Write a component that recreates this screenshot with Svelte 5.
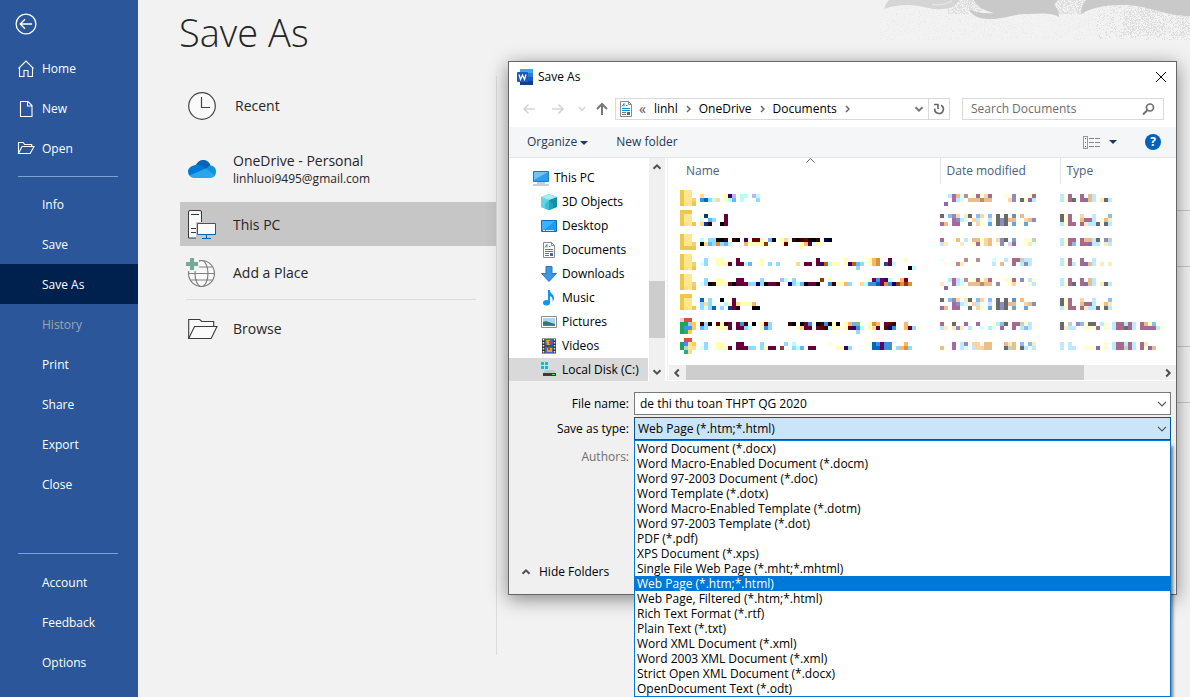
<script lang="ts">
    const topItems = [
        { label: "Home", icon: "home" },
        { label: "New", icon: "page" },
        { label: "Open", icon: "open" }
    ];
    const fileItems = ["Info", "Save", "Save As", "History", "Print", "Share", "Export", "Close"];
    const bottomItems = ["Account", "Feedback", "Options"];

    const crumbs = ["linhl", "OneDrive", "Documents"];

    const treeItems = [
        { label: "This PC", icon: "pc" },
        { label: "3D Objects", icon: "cube" },
        { label: "Desktop", icon: "desktop" },
        { label: "Documents", icon: "doc" },
        { label: "Downloads", icon: "down" },
        { label: "Music", icon: "music" },
        { label: "Pictures", icon: "picture" },
        { label: "Videos", icon: "video" },
        { label: "Local Disk (C:)", icon: "disk" }
    ];

    const fileTypes = [
        "Word Document (*.docx)",
        "Word Macro-Enabled Document (*.docm)",
        "Word 97-2003 Document (*.doc)",
        "Word Template (*.dotx)",
        "Word Macro-Enabled Template (*.dotm)",
        "Word 97-2003 Template (*.dot)",
        "PDF (*.pdf)",
        "XPS Document (*.xps)",
        "Single File Web Page (*.mht;*.mhtml)",
        "Web Page (*.htm;*.html)",
        "Web Page, Filtered (*.htm;*.html)",
        "Rich Text Format (*.rtf)",
        "Plain Text (*.txt)",
        "Word XML Document (*.xml)",
        "Word 2003 XML Document (*.xml)",
        "Strict Open XML Document (*.docx)",
        "OpenDocument Text (*.odt)"
    ];

    let fileName = $state("de thi thu toan THPT QG 2020");
    let fileType = $state("Web Page (*.htm;*.html)");

    // One letter per block colour, "." is an empty block
    const palette: Record<string, string> = {
        k: "#000000", w: "#66003a", r: "#660000", m: "#3a0000", p: "#3a0066", n: "#000066",
        b: "#0066b6", d: "#3a90db", s: "#90dbff", l: "#66b6ff", c: "#b6ffff", C: "#dbffff",
        y: "#ffffb6", Y: "#ffffdb", o: "#ffdb90", O: "#ffb666", t: "#db903a", h: "#903a00",
        H: "#b66600", v: "#b6b6ff", g: "#90b690", u: "#003a90", D: "#3a3a90", z: "#903a3a",
        P: "#660066"
    };
    const iconPalette: Record<string, string> = {
        a: "#ebc94a", f: "#ffe692", e: "#ffe082", n: "#ecd272", i: "#f6cbc8", r: "#dc4e41",
        g: "#1ea362", G: "#37a96b", b: "#4c8bf5", v: "#a8c4f2", y: "#ffcd46", Y: "#fbe09a",
        x: "#f4dc9a", w: "#b5d6c8"
    };

    const folder = ["aff.", "aff.", "affn", "aefa"];
    const folderTop = ["aaa.", "aff.", "aff.", "aefa"];
    const dateA = ["..sPtcz.ywyOw...yYD...yw", "...Psc.ttthtt....OD.kyps", ".p...Y"];
    const dateB = ["kCdDO.ok.dO.d.k.k.u.t", "Y..PDsc.Osy.s.kDktt..OtD", "Pt.Pw..k.Oy.b.kDk.b..b"];
    const typeA = ["s.w..w.ts", "sywk.wpts.oks"];
    const typeB = ["kyw..O..s...d", "kyw..twws.yto", "syww.wossk.ks"];

    const files = [
        {
            icon: folder,
            name: ["o.....ypvYcc.vc", "dbsco.ycl.c...s"],
            date: dateA,
            type: typeA
        },
        {
            icon: folderTop,
            tall: true,
            name: ["Yu....w", "C.ls..w", "oum..kw"],
            date: dateB,
            type: typeB
        },
        {
            icon: ["aff.", "aff.", "affn", "aaaa"],
            name: [
                "c.sskkm.mk.p.rry.lk.yoCmkmrkkm.nk",
                "kolstslc...Oyyyyh...Yr...yOwCyy",
                ".........................y"
            ],
            date: ["w..yt.s.ttyOt.ODk.b..yyg", "so...o..ywyOt.yD.vw..yoC"],
            type: ["syww.wttsk.Dg", "sywd.wwpss.os"]
        },
        {
            icon: folder,
            name: [
                ".s..yy...w.....y.............w......y.....yOt..w...y",
                "Cs..yyyw.wwcl..y.s.s....o.ww.wpHcyy.ypHls.yOt.Dwc",
                ".......................................s............kc"
            ],
            date: ["C.....z..z...c..s.wwgss", ".Y..zo..Y....s.t..w.sDs"],
            type: ["s.w..w..s", "syws.wpts.o.o"]
        },
        {
            icon: folder,
            name: [
                ".s..yy...ww....s....vc.s......h.y.........yPdPpc..Ow",
                "Cskmyyywkwwwssnskwwm..nsclkwwk..dmyyOs..ocddbPtdnhtht"
            ],
            date: ["..sPvcz.ywyOw.y.yyw.D.sy", "o..Psc.ttthtt.D..yO...ys", ".p...Y"],
            type: typeA
        },
        {
            icon: folderTop,
            tall: true,
            name: ["b.s..k..w", "sos...cywoyyyO", "sCsb.s.uwm...kk"],
            date: dateB,
            type: typeB
        },
        {
            icon: ["irr.", "ggvy", "gbby", "gGy."],
            name: [
                "msk.rymw.wdm.k.yrs....mk.kwd.kmdkyk.yOlg..ytO.wrm..O",
                "ls..yyyw.wwsc..yds......yoww.wrmcyy.yrpdc.yow.rnd..OwsY",
                ".......................................s"
            ],
            date: ["w..k..P..P...ysdk.wwgys", "so.oDo.sY.c.sc.w..w.sds"],
            type: ["k.g.Ddykk.sy.swwsws.wtyd", "koss..yyyw.y.swwkws.wwwwsy"]
        },
        {
            icon: [".rr.", "gbYy", "gwfY", ".Gx."],
            name: [
                ".s..yy...ww....s.....s.c........Y.........YbdPdd...O",
                "Cs..yyyw.wwwss.syww.z..scl.ww.....yyps.....bbPdd.sOts"
            ],
            date: ["...P.sD.OO.tt...tot.d.do", "tY.P.sc.sOOtt...kgt.ksCs"],
            type: ["s.s........y.swwsws.wo", "s.ss..yyyp.y.swwgws.wypt"]
        }
    ];

    // Speckles of the header artwork, denser towards the right
    function speckles(count: number, x0: number, x1: number, y0: number, y1: number, seed: number) {
        let d = "";
        let s = seed;
        const next = () => {
            s = (s * 48271) % 2147483647;
            return s / 2147483647;
        };
        next();
        for (let i = 0; i < count; i++) {
            const x = Math.floor(x0 + next() * (x1 - x0));
            const y = Math.floor(y0 + next() * (y1 - y0));
            d += `M${x} ${y}h1v1h-1z`;
        }
        return d;
    }
    const lightDots = speckles(1500, 20, 330, 0, 40, 7);
    const midDots = speckles(400, 88, 122, 0, 14, 91) + speckles(350, 192, 224, 0, 14, 33);
    const denseDots = speckles(500, 236, 330, 6, 40, 12) + speckles(650, 264, 330, 8, 36, 51);
</script>

{#snippet mosaic(lines: string[], colors: Record<string, string>, width: number)}
    <svg class="mosaic" width={width * 4} height={lines.length * 4} shape-rendering="crispEdges" aria-hidden="true">
        {#each lines as line, y}
            {#each line.split("") as cell, x}
                {#if cell !== "."}
                    <rect x={x * 4} y={y * 4} width="4" height="4" fill={colors[cell]} />
                {/if}
            {/each}
        {/each}
    </svg>
{/snippet}

{#snippet chevron(dir: string, color: string)}
    <svg class="chevron {dir}" width="10" height="10" viewBox="0 0 10 10" fill="none" stroke={color} stroke-width="2" aria-hidden="true">
        <path d="M1.5 3.2 5 6.7l3.5-3.5" />
    </svg>
{/snippet}

{#snippet documentIcon()}
    <svg width="16" height="16" viewBox="0 0 16 16" aria-hidden="true">
        <path d="M2.5.5h8l3 3v12h-11z" fill="#fff" stroke="#8a8a8a" />
        <path d="M10.5.5v3h3" fill="none" stroke="#8a8a8a" />
        <path d="M4 5.5 6 2.5v3M8 4.5h1.5M4 7.5h8M4 9.5h8" stroke="#1e88d8" fill="none" />
        <path d="M4 11.5h4M4 13.5h4" stroke="#777" />
        <path d="M9 11h3v3H9z" fill="#3f6f8f" />
    </svg>
{/snippet}

<div class="backstage">
    <nav class="sidebar">
        <button class="back" aria-label="Back">
            <svg width="22" height="22" viewBox="0 0 22 22" fill="none" stroke="#fff" stroke-width="1.3">
                <circle cx="11" cy="11" r="9.9" />
                <path d="M17 11H5.5M10 6.2 5.2 11l4.8 4.8" />
            </svg>
        </button>
        {#each topItems as item}
            <button class="nav-item">
                <svg width="18" height="18" viewBox="0 0 18 18" fill="none" stroke="#fff" stroke-width="1.1">
                    {#if item.icon === "home"}
                        <path d="M1.5 8.5 9 1l7.5 7.5M2.5 7.8v8.7H7v-6h4v6h4.5V7.8" />
                    {:else if item.icon === "page"}
                        <path d="M3.5 1.5H11l4 4v11H3.5zM10.5 1.5V6H15" />
                    {:else}
                        <path d="M1.5 13.5v-11h4.7l1.5 2h7v2M1.5 13.5l3.5-7h12l-3.8 7z" />
                    {/if}
                </svg>
                {item.label}
            </button>
        {/each}
        <hr />
        {#each fileItems as item}
            <button class="nav-item" class:active={item === "Save As"} disabled={item === "History"}>{item}</button>
        {/each}
        <hr class="push" />
        {#each bottomItems as item}
            <button class="nav-item">{item}</button>
        {/each}
    </nav>

    <main>
        <svg class="art" width="330" height="42" viewBox="0 0 330 42" shape-rendering="auto" aria-hidden="true">
            <path d={lightDots} fill="#ebebeb" />
            <path d={midDots} fill="#dfdfdf" />
            <path d={denseDots} fill="#dedede" />
            <path d="M24 9c1-4 3-7 5-9h71c-5 6-10 9-18 9-13 1-20-4-34-4-9 0-16 1-24 4z" fill="#d5d5d5" />
            <path d="M72 4c8 2 14 0 20-3" fill="none" stroke="#ececec" />
            <path d="M109 9c2 6 9 10 21 10 15 0 22-5 38-5 12 0 23-2 31 3 0-6-3-10-5-12l4-5h-84c3 6 8 10 20 13-10 1-18 0-25-4z" fill="#c9c9c9" />
            <path d="M221 14c0-6 2-11 5-14h104v16c-25 0-42-11-68-11-18 0-31 3-41 9z" fill="#c9c9c9" />
        </svg>
        <h1>Save As</h1>
        <div class="content">
            <div class="places">
                <button class="place recent-place">
                    <svg width="28" height="28" viewBox="0 0 28 28" fill="none" stroke="#444" stroke-width="1.2">
                        <circle cx="14" cy="14" r="13.3" fill="#fafafa" />
                        <path d="M13.5 5v10.5H22" />
                    </svg>
                    <span>Recent</span>
                </button>
                <button class="place drive">
                    <svg width="28" height="18" viewBox="0 0 28 18">
                        <path d="M8 5C9 2 12 0 15 0c3.500 0 6.500 2 7.500 5.500L17 10z" fill="#0364b8" />
                        <path d="M5.500 17.500A5.800 5.800 0 0 1 0 12c0-3.500 2.800-6 6-6.500 2-1.500 5-1.500 7 0l6 4-13 8z" fill="#0078d4" />
                        <path d="M22 5.500c3.500 0 6 2.500 6 6 0 2-.7 3.500-2 4.800L17 10z" fill="#1490df" />
                        <path d="M1.500 15.500 17.500 8.500 27 15.500c-1 1.500-2.500 2.500-4.500 2.500H6c-2 0-3.500-1-4.500-2.500z" fill="#28a8ea" />
                    </svg>
                    <span>OneDrive - Personal<small>linhluoi9495@gmail.com</small></span>
                </button>
                <button class="place selected">
                    <svg width="28" height="30" viewBox="0 0 28 30">
                        <path d="M.5 28V2Q.5.5 2 .5h10q1.500 0 1.500 1.500v26z" fill="#fafafa" stroke="#3b3b3b" />
                        <path d="M3 4.500h8M3 18.500h5M3 22.500h5" stroke="#3b3b3b" />
                        <path d="M8 12h20v18H8z" fill="#c6c6c6" />
                        <path d="M9.500 13.500h18v11h-18z" fill="#fafafa" stroke="#0063b1" />
                        <path d="M18.500 25v3.500M14 28.500h9" stroke="#0063b1" />
                    </svg>
                    <span>This PC</span>
                </button>
                <button class="place add">
                    <svg width="30" height="30" viewBox="0 0 30 30" fill="none" stroke="#808080" stroke-width="1.2">
                        <circle cx="15.5" cy="15.5" r="13" fill="#fafafa" />
                        <ellipse cx="15.5" cy="15.5" rx="6.5" ry="13" />
                        <path d="M2.500 15.500h26M5 9h21M5 22h21" />
                        <path d="M0 0h13v13H0z" fill="#f2f2f2" stroke="none" />
                        <path d="M4 0h4v4h4v4H8v4H4V8H0V4h4z" fill="#76a797" stroke="none" />
                    </svg>
                    <span>Add a Place</span>
                </button>
                <hr />
                <button class="place browse">
                    <svg width="30" height="22" viewBox="0 0 30 22" fill="#fafafa" stroke="#3b3b3b" stroke-width="1.1">
                        <path d="M.7 20.500V1.500h11l2 2h12v5" />
                        <path d="M.7 20.500 6.500 8.500h22.500l-5.800 12z" />
                    </svg>
                    <span>Browse</span>
                </button>
            </div>
            <div class="recent">
                {#each ["", "short", "", "short"] as size}
                    <div class="recent-row {size}"></div>
                {/each}
            </div>
        </div>
    </main>

    <section class="dialog" role="dialog" aria-label="Save As">
        <header class="titlebar">
            <svg width="16" height="16" viewBox="0 0 16 16" aria-hidden="true">
                <path d="M3 0h13v4H3z" fill="#41a5ee" />
                <path d="M3 4h13v4H3z" fill="#2b7cd3" />
                <path d="M3 8h13v4H3z" fill="#185abd" />
                <path d="M3 12h13v4H3z" fill="#103f91" />
                <rect y="3" width="11" height="10" rx="1" fill="#185abd" />
                <path d="m2 5.500 1.500 5 2-4.500 2 4.500L9 5.500" fill="none" stroke="#fff" stroke-width="1.3" />
            </svg>
            <span>Save As</span>
            <button class="close" aria-label="Close">
                <svg width="12" height="12" viewBox="0 0 12 12" stroke="#000"><path d="m1 1 10 10M11 1 1 11" /></svg>
            </button>
        </header>

        <div class="address">
            <div class="arrows">
                <button aria-label="Back" disabled>
                    <svg width="14" height="12" viewBox="0 0 14 12" fill="none" stroke="#d5d5d5" stroke-width="1.6"><path d="M13 6H2M6.5 1.5 2 6l4.5 4.5" /></svg>
                </button>
                <button aria-label="Forward" disabled>
                    <svg width="14" height="12" viewBox="0 0 14 12" fill="none" stroke="#d5d5d5" stroke-width="1.6"><path d="M1 6h11M7.5 1.5 12 6l-4.5 4.5" /></svg>
                </button>
                <button aria-label="Recent locations" class="small">
                    <svg width="8" height="8" viewBox="0 0 8 8" fill="none" stroke="#d5d5d5" stroke-width="1.5"><path d="m1 2 3 3.5L7 2" /></svg>
                </button>
                <button aria-label="Up">
                    <svg width="12" height="14" viewBox="0 0 12 14" fill="none" stroke="#777" stroke-width="2"><path d="M6 13V2M1 7l5-5 5 5" /></svg>
                </button>
            </div>
            <div class="path">
                {@render documentIcon()}
                <span class="overflow">«</span>
                {#each crumbs as crumb}
                    <button class="crumb">{crumb}</button>
                    <svg width="5" height="8" viewBox="0 0 5 8" fill="none" stroke="#666" stroke-width="1.5" aria-hidden="true"><path d="m1 1 3 3-3 3" /></svg>
                {/each}
                <button class="history" aria-label="Previous locations">{@render chevron("", "#777")}</button>
                <button class="refresh" aria-label="Refresh">
                    <svg width="12" height="12" viewBox="0 0 12 12" fill="none" stroke="#666" stroke-width="1.6"><path d="M8 2.3A4.300 4.300 0 1 1 1.800 5.500M1 1.500h4V6" /></svg>
                </button>
            </div>
            <div class="search">
                <input type="search" placeholder="Search Documents" aria-label="Search Documents" />
                <svg width="14" height="12" viewBox="0 0 14 12" fill="none" stroke="#707070" aria-hidden="true">
                    <circle cx="9" cy="4.5" r="3.5" stroke-width="1.7" />
                    <path d="M6.500 7 2 11.500" stroke-width="2" />
                </svg>
            </div>
        </div>

        <div class="toolbar">
            <button>Organize <i class="caret"></i></button>
            <button>New folder</button>
            <button class="view" aria-label="Change your view">
                <svg width="17" height="13" viewBox="0 0 17 13" fill="none" shape-rendering="crispEdges">
                    <path d="M.5.5h4v12h-4z" stroke="#999" />
                    <path d="M6 2.5h5M12 2.5h5M6 6.5h5M12 6.5h5M6 10.5h5M12 10.5h5" stroke="#888" />
                    <path d="M2 2h1v1H2z" fill="#555" />
                    <path d="M2 6h1v1H2z" fill="#2d8fe0" />
                    <path d="M2 10h1v1H2z" fill="#d03030" />
                </svg>
                <i class="caret"></i>
            </button>
            <button class="help" aria-label="Help">?</button>
        </div>

        <div class="explorer">
            <ul class="tree">
                {#each treeItems as item, i}
                    <li class:root={i === 0} class:current={item.icon === "disk"}>
                        {#if item.icon === "doc"}
                            {@render documentIcon()}
                        {:else}
                            <svg width="16" height="16" viewBox="0 0 16 16" aria-hidden="true">
                                {#if item.icon === "pc"}
                                    <path d="M.5 1.5h15v10H.5z" fill="#2d9fee" stroke="#1b7cc4" />
                                    <path d="M1 2h14L1 10z" fill="#6cc4fa" />
                                    <path d="M4 13h8M0 15h16" stroke="#8ca0b0" />
                                {:else if item.icon === "cube"}
                                    <path d="M0 3 8 0l8 3v10l-8 3-8-3z" fill="#3cc3d8" />
                                    <path d="M0 3 8 6v10l-8-3z" fill="#62d5e2" />
                                    <path d="m8 6 8-3v10l-8 3z" fill="#158fa5" />
                                    <path d="m0 3 8-3 8 3-8 3z" fill="#a6ecf2" />
                                    <path d="m4 10 4-4 4 4v5l-4 1-4-1z" fill="#2ab0c8" opacity=".6" />
                                {:else if item.icon === "desktop"}
                                    <path d="M.5 2.5h15v11H.5z" fill="#1a9cf5" stroke="#0f6fb8" />
                                    <path d="M1 3h13L3 12H1z" fill="#3fb2ff" />
                                    <path d="M2 12.5h2M5 12.5h8" stroke="#bfe6ff" />
                                {:else if item.icon === "down"}
                                    <path d="M5 .5h6v7h4.5l-7.5 8-7.500-8H5z" fill="#3b97e3" stroke="#2778c0" />
                                {:else if item.icon === "music"}
                                    <ellipse cx="5.5" cy="12.8" rx="3.5" ry="2.7" fill="#0d97f5" />
                                    <path d="M7 0h2c0 4 4 4 4 8 0 1.500-.5 2.500-1.500 3.500C12 8 11 7 9 6v7H7z" fill="#0d97f5" />
                                {:else if item.icon === "picture"}
                                    <path d="M.5 2.5h15v11H.5z" fill="#fff" stroke="#8c8c8c" />
                                    <path d="M2 4h12v8H2z" fill="#a9d6f5" />
                                    <path d="M2 8c3-2 5 0 12 2v2H2z" fill="#3d7354" />
                                    <path d="M2 10.5h12V12H2z" fill="#3f7fae" />
                                {:else if item.icon === "video"}
                                    <path d="M1 .5h14v15H1z" fill="#333" />
                                    <path d="M4 1h8v6.500H4zM4 8.500h8V15H4z" fill="#3a66c0" />
                                    <path d="M5 2h4v5H6zM6 10h5v4H6z" fill="#e0a526" />
                                    <path d="M8 3h3v3H8zM7 9h2v3H7z" fill="#c8402c" />
                                    <path d="M2.500 1v14M13.500 1v14" stroke="#eee" stroke-width="1.5" stroke-dasharray="1.5 1.5" />
                                {:else}
                                    <path d="M0 0h3v3H0zM4 0h3v3H4zM0 4h3v3H0zM4 4h3v3H4z" fill="#14b8e6" />
                                    <path d="M4 8h9l2 3H2z" fill="#c5c8ca" />
                                    <path d="M2 11h13v3H2z" fill="#3c3c3c" />
                                    <path d="M11 12.500h3" stroke="#4be04b" />
                                {/if}
                            </svg>
                        {/if}
                        {item.label}
                    </li>
                {/each}
            </ul>
            <div class="vscroll">
                {@render chevron("up", "#505050")}
                <div class="thumb"></div>
                {@render chevron("", "#505050")}
            </div>
            <div class="listing">
                <table>
                    <thead>
                        <tr>
                            <th class="name">
                                Name
                                <svg class="sort" width="9" height="5" viewBox="0 0 9 5" fill="none" stroke="#666" aria-hidden="true"><path d="m.5 4.5 4-4 4 4" /></svg>
                            </th>
                            <th class="date">Date modified</th>
                            <th>Type</th>
                        </tr>
                    </thead>
                    <tbody>
                        {#each files as file}
                            <tr class:tall={file.tall}>
                                <td>
                                    <div class="file">
                                        {@render mosaic(file.icon, iconPalette, 4)}
                                        <div class="label">{@render mosaic(file.name, palette, 55)}</div>
                                    </div>
                                </td>
                                <td><div class="label faded">{@render mosaic(file.date, palette, 24)}</div></td>
                                <td><div class="label faded">{@render mosaic(file.type, palette, 26)}</div></td>
                            </tr>
                        {/each}
                    </tbody>
                </table>
                <div class="hscroll">
                    {@render chevron("left", "#505050")}
                    <div class="thumb"></div>
                    {@render chevron("right", "#505050")}
                </div>
            </div>
        </div>

        <div class="form">
            <label for="file-name">File name:</label>
            <div class="field">
                <input id="file-name" type="text" bind:value={fileName} />
                <svg class="drop" width="10" height="6" viewBox="0 0 10 6" fill="none" stroke="#555" stroke-width="1.2" aria-hidden="true"><path d="m1 .8 4 4 4-4" /></svg>
            </div>
            <label for="file-type">Save as type:</label>
            <div class="field">
                <select id="file-type" bind:value={fileType}>
                    {#each fileTypes as type}
                        <option>{type}</option>
                    {/each}
                </select>
                <svg class="drop" width="10" height="6" viewBox="0 0 10 6" fill="none" stroke="#555" stroke-width="1.2" aria-hidden="true"><path d="m1 .8 4 4 4-4" /></svg>
                <ul class="menu" role="listbox" aria-label="Save as type">
                    {#each fileTypes as type}
                        <li role="option" aria-selected={type === fileType}>{type}</li>
                    {/each}
                </ul>
            </div>
            <span class="authors">Authors:</span>
        </div>
        <button class="hide">{@render chevron("up", "#505050")} Hide Folders</button>
    </section>
</div>

<style>
    :global(body) {
        overflow: hidden;
    }

    .backstage {
        position: relative;
        display: flex;
        min-height: 100vh;
        background: #f2f2f2;
        color: #000;
        font-family: "Open Sans", "Noto Sans", sans-serif;
        font-size: 12px;
        line-height: 16px;
    }

    .backstage * {
        box-sizing: border-box;
    }

    svg {
        display: block;
        flex: none;
    }

    button {
        padding: 0;
        border: none;
        background: none;
        color: inherit;
        font: inherit;
        text-align: left;
        cursor: pointer;
    }

    ul {
        margin: 0;
        padding: 0;
        list-style: none;
    }

    /**** sidebar ****/
    .sidebar {
        display: flex;
        flex: none;
        flex-direction: column;
        width: 138px;
        padding-bottom: 15px;
        background: #2b579a;
        color: #fff;
    }

    .back {
        height: 48px;
        padding-left: 15px;
    }

    .nav-item {
        display: flex;
        align-items: center;
        gap: 7px;
        height: 40px;
        padding-top: 2px;
        padding-left: 42px;
    }

    .nav-item:has(svg) {
        padding-left: 17px;
    }

    .nav-item.active {
        background: #00204d;
    }

    .nav-item:disabled {
        color: #a0a4ac;
    }

    .sidebar hr {
        width: 100px;
        height: 1px;
        margin: 8px 20px 7px 18px;
        border: none;
        background: #7ba3cc;
    }

    .sidebar hr.push {
        margin-top: auto;
        margin-bottom: 8px;
    }

    /**** main pane ****/
    main {
        position: relative;
        display: flex;
        flex: 1;
        flex-direction: column;
        padding: 8px 0 42px 41px;
    }

    .art {
        position: absolute;
        top: 0;
        right: 0;
    }

    h1 {
        margin: 0;
        color: #262626;
        font-size: 38px;
        font-weight: 300;
        line-height: 48px;
    }

    .content {
        display: flex;
        flex: 1;
        margin-top: 20px;
        padding-left: 1px;
    }

    .places {
        display: flex;
        flex: none;
        flex-direction: column;
        width: 317px;
        border-right: 1px solid #dcdcdc;
    }

    .place {
        display: flex;
        align-items: center;
        gap: 17px;
        height: 44px;
        padding-top: 1px;
        padding-left: 8px;
        color: #262626;
        font-size: 14px;
        line-height: 20px;
    }

    .place small {
        display: block;
        font-size: 12px;
        line-height: 16px;
    }

    .recent-place {
        gap: 19px;
        height: 58px;
    }

    .drive {
        height: 68px;
    }

    .selected {
        background: #c6c6c6;
    }

    .add {
        height: 53px;
        padding-left: 6px;
    }

    .browse {
        height: 57px;
        gap: 15px;
    }

    .places hr {
        width: 290px;
        height: 1px;
        margin: 0 0 0 6px;
        border: none;
        background: #dcdcdc;
    }

    .recent {
        flex: 1;
        margin-left: 24px;
        padding-top: 55px;
    }

    .recent-row {
        height: 80px;
        border-bottom: 1px solid #c8c8c8;
    }

    .recent-row.short {
        height: 56px;
    }

    /**** dialog ****/
    .dialog {
        position: absolute;
        top: 61px;
        right: 13px;
        left: 508px;
        border: 1px solid #666;
        background: #f0f0f0;
        box-shadow: 0 4px 18px rgba(0, 0, 0, .45);
    }

    .titlebar {
        display: flex;
        align-items: center;
        gap: 5px;
        height: 29px;
        padding: 0 9px 0 8px;
        background: #fff;
    }

    .close {
        margin-left: auto;
    }

    .address {
        display: flex;
        align-items: center;
        gap: 12px;
        height: 36px;
        padding: 0 12px 0 13px;
        background: #fff;
    }

    .arrows {
        display: flex;
        flex: none;
        align-items: center;
        gap: 15px;
        width: 81px;
    }

    .arrows .small {
        margin: 0 -5px 0 -2px;
    }

    .path {
        display: flex;
        flex: 1;
        align-items: center;
        height: 22px;
        padding-left: 2px;
        border: 1px solid #d9d9d9;
    }

    .overflow {
        margin-left: 5px;
        color: #555;
        font-size: 14px;
    }

    .crumb {
        padding: 0 8px;
    }

    .history {
        margin-left: auto;
        padding: 0 4px;
    }

    .refresh {
        align-self: stretch;
        padding: 0 4px;
        border-left: 1px solid #d9d9d9;
    }

    .search {
        display: flex;
        align-items: center;
        width: 202px;
        height: 22px;
        padding: 0 8px;
        border: 1px solid #d9d9d9;
    }

    .search input {
        flex: 1;
        min-width: 0;
        padding: 0;
        border: none;
        outline: none;
        background: none;
        font: inherit;
    }

    .search input::placeholder {
        color: #6d6d6d;
        opacity: 1;
    }

    .toolbar {
        display: flex;
        align-items: center;
        gap: 28px;
        height: 31px;
        padding: 0 15px 0 18px;
        border-bottom: 1px solid #e2e4e6;
        background: #f5f6f7;
        color: #1e395b;
    }

    .caret {
        display: inline-block;
        border: 4px solid transparent;
        border-top-color: #1e395b;
        border-bottom: none;
        vertical-align: middle;
    }

    .view {
        display: flex;
        align-items: center;
        gap: 9px;
        margin-left: auto;
    }

    .help {
        width: 16px;
        height: 16px;
        border-radius: 50%;
        background: #0063b8;
        color: #fff;
        font-weight: 700;
        text-align: center;
    }

    .explorer {
        display: flex;
        height: 223px;
        background: #fff;
    }

    .tree {
        flex: none;
        width: 140px;
        padding: 8px 1px 0 0;
        overflow: hidden;
    }

    .tree li {
        display: flex;
        align-items: center;
        gap: 5px;
        height: 24px;
        padding-left: 32px;
        white-space: nowrap;
    }

    .tree li.root {
        padding-left: 24px;
    }

    .tree li.current {
        background: #d9d9d9;
    }

    .vscroll {
        display: flex;
        flex: none;
        flex-direction: column;
        align-items: center;
        width: 16px;
        padding: 4px 0;
        background: #f0f0f0;
    }

    .vscroll .thumb {
        width: 100%;
        height: 57px;
        margin: auto 0 29px;
        background: #cdcdcd;
    }

    .chevron.up {
        transform: rotate(180deg);
    }

    .chevron.left {
        transform: rotate(90deg);
    }

    .chevron.right {
        transform: rotate(-90deg);
    }

    .listing {
        display: flex;
        flex: 1;
        flex-direction: column;
        min-width: 0;
        margin-left: 2px;
        border-left: 1px solid #f0f0f0;
    }

    table {
        width: 100%;
        border-collapse: collapse;
        table-layout: fixed;
    }

    th {
        height: 26px;
        padding: 0 0 0 6px;
        border-left: 1px solid #e5e5e5;
        color: #4c607a;
        font-weight: 400;
        text-align: left;
    }

    th.name {
        position: relative;
        width: 272px;
        padding-left: 18px;
        border-left: none;
    }

    th.date {
        width: 120px;
    }

    .sort {
        position: absolute;
        top: 0;
        left: 138px;
    }

    tbody::before {
        display: block;
        height: 6px;
        content: "";
    }

    td {
        height: 20px;
        padding: 0;
        vertical-align: top;
    }

    tr.tall td {
        height: 24px;
    }

    .file {
        display: flex;
        height: 16px;
        gap: 4px;
        padding-left: 12px;
    }

    .label {
        height: 16px;
        padding-top: 4px;
    }

    .faded {
        opacity: .58;
    }

    .hscroll {
        display: flex;
        align-items: center;
        height: 15px;
        margin: auto 0 1px 1px;
        padding: 0 3px;
        background: #f0f0f0;
    }

    .hscroll .thumb {
        flex: 1;
        height: 15px;
        margin: 0 79px 0 4px;
        background: #cdcdcd;
    }

    /**** name and type fields ****/
    .form {
        display: grid;
        grid-template-columns: 120px 1fr;
        align-items: center;
        gap: 2px 5px;
        padding: 11px 5px 0 0;
    }

    .form label,
    .authors {
        text-align: right;
    }

    .authors {
        margin-top: 7px;
        color: #6d6d6d;
    }

    .field {
        position: relative;
    }

    .field input,
    .field select {
        display: block;
        width: 100%;
        height: 23px;
        padding: 0 20px 0 5px;
        border: 1px solid #7a7a7a;
        border-radius: 0;
        outline: none;
        background: #fff;
        color: #000;
        font: inherit;
        appearance: none;
    }

    .field select {
        padding-left: 3px;
        border-color: #005499;
        background: #cce4f7;
    }

    .drop {
        position: absolute;
        top: 9px;
        right: 4px;
        pointer-events: none;
    }

    .menu {
        position: absolute;
        top: 100%;
        right: 0;
        left: 0;
        border: 1px solid #0078d7;
        background: #fff;
        box-shadow: 3px 5px 3px -1px rgba(0, 0, 0, .5);
    }

    .menu li {
        height: 15px;
        padding-left: 2px;
        line-height: 15px;
        white-space: nowrap;
    }

    .menu li[aria-selected="true"] {
        background: #0078d7;
        color: #fff;
    }

    .hide {
        display: flex;
        align-items: center;
        gap: 8px;
        margin: 99px 0 14px 12px;
    }
</style>
